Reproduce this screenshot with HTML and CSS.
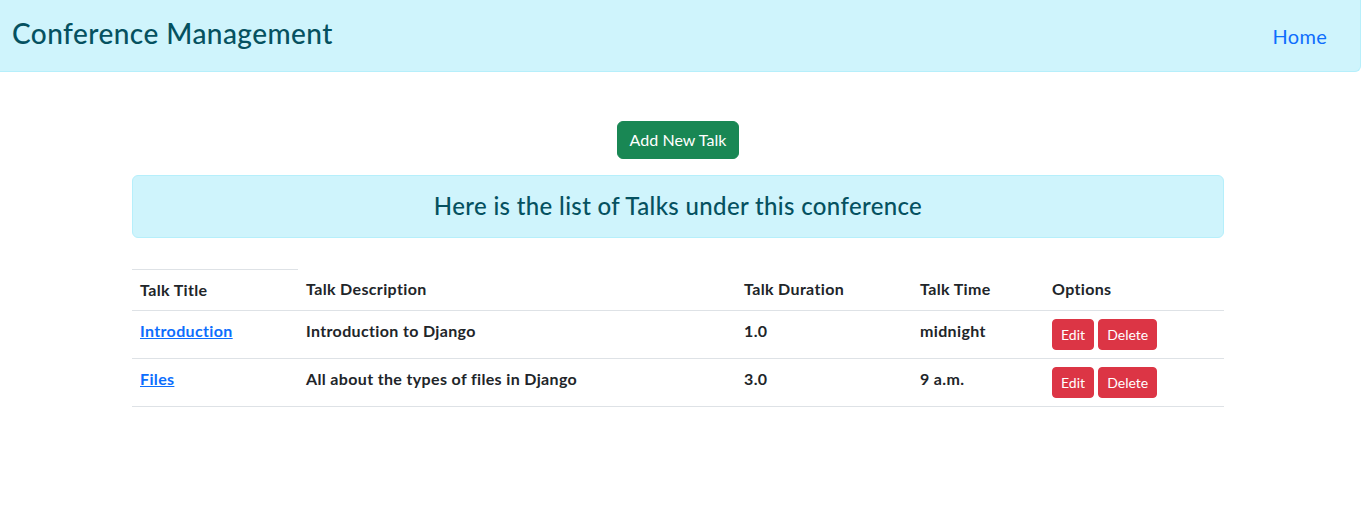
FILE: index.html
```html
<!DOCTYPE html>
<html lang="en">
<head>
<meta charset="utf-8">
<title>Conference Management</title>
<link rel="stylesheet" href="styles.css">
</head>
<body>
<nav class="topbar">
  <h3 class="brand">Conference Management</h3>
  <a class="home-link" href="#">Home</a>
</nav>
<main class="content">
  <div class="action-row">
    <a class="btn btn-success" href="#">Add New Talk</a>
  </div>
  <div class="alert-info">
    <h4 class="alert-title">Here is the list of Talks under this conference</h4>
  </div>
  <table class="talks">
    <colgroup>
      <col class="c1"><col class="c2"><col class="c3"><col class="c4"><col class="c5">
    </colgroup>
    <thead>
      <tr>
        <th class="first-head">Talk Title</th>
        <th>Talk Description</th>
        <th>Talk Duration</th>
        <th>Talk Time</th>
        <th>Options</th>
      </tr>
    </thead>
    <tbody>
      <tr>
        <td><a class="talk-link" href="#">Introduction</a></td>
        <td>Introduction to Django</td>
        <td>1.0</td>
        <td>midnight</td>
        <td><a class="btn-sm btn-danger" href="#">Edit</a> <a class="btn-sm btn-danger" href="#">Delete</a></td>
      </tr>
      <tr>
        <td><a class="talk-link" href="#">Files</a></td>
        <td>All about the types of files in Django</td>
        <td>3.0</td>
        <td>9 a.m.</td>
        <td><a class="btn-sm btn-danger" href="#">Edit</a> <a class="btn-sm btn-danger" href="#">Delete</a></td>
      </tr>
    </tbody>
  </table>
</main>
</body>
</html>
```
FILE: styles.css
```css
* { box-sizing: border-box; }
body {
  margin: 0;
  font-family: Lato, "Open Sans", "Liberation Sans", sans-serif;
  font-size: 16px;
  line-height: 1.5;
  color: #212529;
  background: #fff;
}
.topbar {
  display: flex;
  justify-content: space-between;
  align-items: baseline;
  height: 73px;
  padding: 18px 33px 0 12px;
  background: #cff4fc;
  border: 1px solid #b6effb;
  border-top: none;
  border-left: none;
  border-bottom-right-radius: 6px;
  margin-top: -1px;
}
.brand {
  margin: 0;
  font-size: 28px;
  font-weight: 500;
  line-height: 1.2;
  letter-spacing: 0.45px;
  color: #055160;
}
.home-link {
  font-size: 20px;
  color: #0d6efd;
  text-decoration: none;
  letter-spacing: 0.3px;
}
.content {
  width: 1092px;
  margin-left: 132px;
  padding-top: 49px;
}
.action-row {
  display: flex;
  justify-content: center;
  margin-bottom: 16px;
}
.btn {
  display: inline-block;
  padding: 6px 12px;
  font-size: 16px;
  line-height: 24px;
  border-radius: 6px;
  text-decoration: none;
  border: 1px solid transparent;
  letter-spacing: 0.05px;
}
.btn-success {
  background: #198754;
  border-color: #198754;
  color: #fff;
}
.alert-info {
  background: #cff4fc;
  border: 1px solid #b6effb;
  border-radius: 6px;
  padding: 16px;
  color: #055160;
  text-align: center;
}
.alert-title {
  margin: 0;
  font-size: 24px;
  font-weight: 500;
  line-height: 1.2;
  letter-spacing: 0.35px;
}
.talks {
  width: 100%;
  margin-top: 31px;
  border-collapse: collapse;
  font-weight: 700;
  letter-spacing: 0.35px;
}
.c1 { width: 166px; }
.c2 { width: 438px; }
.c3 { width: 176px; }
.c4 { width: 132px; }
.c5 { width: 180px; }
.talks th, .talks td {
  text-align: left;
  vertical-align: top;
  padding: 8px;
  line-height: 24px;
  border-bottom: 1px solid #dee2e6;
}
.talks th.first-head { border-top: 1px solid #dee2e6; }
.talk-link {
  color: #0d6efd;
  text-decoration: underline;
}
.btn-sm {
  display: inline-block;
  padding: 4px 8px;
  font-size: 14px;
  font-weight: 400;
  line-height: 21px;
  border: 1px solid transparent;
  border-radius: 4px;
  text-decoration: none;
  letter-spacing: 0;
}
.btn-danger {
  background: #dc3545;
  border-color: #dc3545;
  color: #fff;
}
```
